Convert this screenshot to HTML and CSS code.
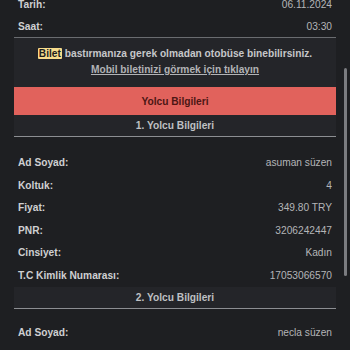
FILE: index.html
```html
<!DOCTYPE html>
<html lang="tr">
<head>
<meta charset="utf-8">
<link rel="stylesheet" href="styles.css">
</head>
<body>
<div class="page">
  <div class="trip">
    <div class="row"><span class="label">Tarih:</span><span class="value">06.11.2024</span></div>
    <div class="row"><span class="label">Saat:</span><span class="value">03:30</span></div>
  </div>
  <div class="notice">
    <div><mark class="hl">Bilet</mark> bastırmanıza gerek olmadan otobüse binebilirsiniz.</div>
    <div><a class="link" href="#">Mobil biletinizi görmek için tıklayın</a></div>
  </div>
  <div class="btn">Yolcu Bilgileri</div>

  <div class="section-head">1. Yolcu Bilgileri</div>
  <div class="section-body">
    <div class="row prow"><span class="label">Ad Soyad:</span><span class="value">asuman süzen</span></div>
    <div class="row prow"><span class="label">Koltuk:</span><span class="value">4</span></div>
    <div class="row prow"><span class="label">Fiyat:</span><span class="value">349.80 TRY</span></div>
    <div class="row prow"><span class="label">PNR:</span><span class="value">3206242447</span></div>
    <div class="row prow"><span class="label">Cinsiyet:</span><span class="value">Kadın</span></div>
    <div class="row prow"><span class="label">T.C Kimlik Numarası:</span><span class="value">17053066570</span></div>
  </div>

  <div class="section-head">2. Yolcu Bilgileri</div>
  <div class="section-body second">
    <div class="row prow"><span class="label">Ad Soyad:</span><span class="value">necla süzen</span></div>
  </div>
</div>
<div class="scrollbar"></div>
</body>
</html>
```
FILE: styles.css
```css
html, body {
  margin: 0;
  padding: 0;
  background: #1e1f22;
  height: 100%;
  overflow: hidden;
}
body {
  font-family: "Liberation Sans", Arial, sans-serif;
  font-size: 10.2px;
  color: #c9cacc;
}
.page {
  margin: -7px 14px 0 14px;
}
.row {
  display: flex;
  justify-content: space-between;
  align-items: center;
  height: 22px;
  padding: 0 4px;
}
.prow {
  height: 22.5px;
}
.label {
  font-weight: bold;
  color: #cfd0d2;
}
.value {
  color: #b4b5b8;
}
.trip {
  border-bottom: 1px solid #6a6c70;
}
.notice {
  background: #242529;
  padding: 8px 0 9px 0;
  text-align: center;
  line-height: 16px;
  font-weight: bold;
  color: #c6c7c9;
}
.hl {
  background: #f7dc8c;
  color: #1c1c1c;
  padding: 0 1px;
  border-radius: 1px;
}
.link {
  color: #b2b3b6;
  text-decoration: underline;
}
.btn {
  background: #e1625c;
  height: 28px;
  display: flex;
  align-items: center;
  justify-content: center;
  font-weight: bold;
  color: #4c1614;
}
.section-head {
  background: #242529;
  height: 21px;
  display: flex;
  align-items: center;
  justify-content: center;
  font-weight: bold;
  color: #bfc0c3;
  border-bottom: 1px solid #8c8e92;
}
.section-body {
  padding-top: 14.5px;
}
.section-body.second {
  padding-top: 13px;
}
.scrollbar {
  position: absolute;
  left: 344px;
  top: 68px;
  width: 3px;
  height: 208px;
  border-radius: 2px;
  background: #7b7c80;
}
```
